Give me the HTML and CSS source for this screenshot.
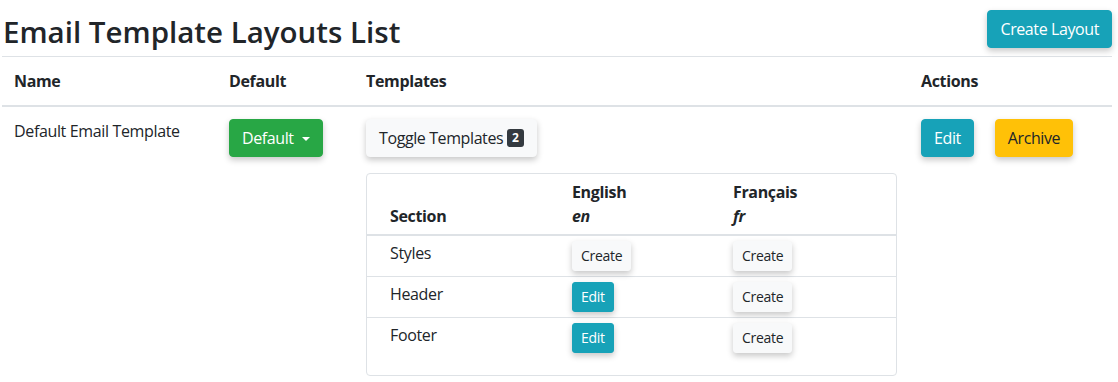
FILE: index.html
```html
<!DOCTYPE html>
<html lang="en">
<head>
<meta charset="utf-8">
<title>Email Template Layouts List</title>
<link rel="stylesheet" href="styles.css">
</head>
<body>
<div class="page">
  <div class="page-header">
    <h1 class="title">Email Template Layouts List</h1>
    <button class="btn btn-info btn-shadow">Create Layout</button>
  </div>
  <table class="layouts">
    <thead>
      <tr>
        <th class="col-name">Name</th>
        <th class="col-default">Default</th>
        <th class="col-templates">Templates</th>
        <th class="col-actions">Actions</th>
      </tr>
    </thead>
    <tbody>
      <tr>
        <td>Default Email Template</td>
        <td><button class="btn btn-success btn-shadow">Default<span class="caret"></span></button></td>
        <td>
          <button class="btn btn-light btn-shadow">Toggle Templates <span class="badge">2</span></button>
          <div class="templates-card">
            <table class="templates">
              <thead>
                <tr>
                  <th class="t-section">Section</th>
                  <th class="t-lang">English<br><em>en</em></th>
                  <th class="t-lang">Français<br><em>fr</em></th>
                </tr>
              </thead>
              <tbody>
                <tr>
                  <td class="t-section">Styles</td>
                  <td><button class="btn btn-sm btn-light btn-shadow">Create</button></td>
                  <td><button class="btn btn-sm btn-light btn-shadow">Create</button></td>
                </tr>
                <tr>
                  <td class="t-section">Header</td>
                  <td><button class="btn btn-sm btn-info btn-shadow">Edit</button></td>
                  <td><button class="btn btn-sm btn-light btn-shadow">Create</button></td>
                </tr>
                <tr>
                  <td class="t-section">Footer</td>
                  <td><button class="btn btn-sm btn-info btn-shadow">Edit</button></td>
                  <td><button class="btn btn-sm btn-light btn-shadow">Create</button></td>
                </tr>
              </tbody>
            </table>
          </div>
        </td>
        <td>
          <div class="actions">
            <button class="btn btn-info btn-shadow">Edit</button>
            <button class="btn btn-warning btn-shadow">Archive</button>
          </div>
        </td>
      </tr>
    </tbody>
  </table>
</div>
</body>
</html>
```
FILE: styles.css
```css
* { box-sizing: border-box; }
html, body {
  margin: 0;
  background: #fff;
}
body {
  font-family: "Open Sans", "Noto Sans", "Liberation Sans", sans-serif;
  font-size: 16px;
  line-height: 24px;
  letter-spacing: -0.35px;
  color: #212529;
}
.page {
  padding: 0 6px 0 2px;
}
.page-header {
  display: flex;
  justify-content: space-between;
  align-items: flex-start;
  padding-top: 10px;
  height: 56px;
}
.title {
  margin: 4px 0 0 1px;
  font-size: 29.5px;
  line-height: 36px;
  font-weight: 600;
  letter-spacing: 0;
  color: #212529;
}
.btn {
  display: inline-block;
  font-family: inherit;
  font-size: 16px;
  line-height: 24px;
  letter-spacing: -0.4px;
  padding: 6px 12px;
  border: 1px solid transparent;
  border-radius: 4px;
  cursor: pointer;
  white-space: nowrap;
}
.btn-sm {
  font-size: 14px;
  line-height: 20px;
  letter-spacing: -0.3px;
  padding: 4px 8px;
  border-radius: 3px;
}
.btn-shadow { box-shadow: 0 3px 6px rgba(0, 0, 0, 0.22); }
.btn-info { background: #17a2b8; border-color: #17a2b8; color: #fff; }
.btn-success { background: #28a745; border-color: #28a745; color: #fff; }
.btn-warning { background: #ffc107; border-color: #ffc107; color: #212529; }
.btn-light { background: #f8f9fa; border-color: #f8f9fa; color: #212529; }
.caret {
  display: inline-block;
  margin-left: 8px;
  vertical-align: 3px;
  border-top: 4.5px solid #fff;
  border-left: 4.5px solid transparent;
  border-right: 4.5px solid transparent;
}
.badge {
  display: inline-block;
  background: #343a40;
  color: #fff;
  font-size: 12px;
  line-height: 12px;
  font-weight: 700;
  letter-spacing: 0;
  padding: 3px 5px;
  border-radius: 3px;
  vertical-align: 2px;
}
.layouts {
  width: 100%;
  border-collapse: collapse;
}
.layouts > thead > tr > th,
.layouts > tbody > tr > td {
  padding: 12px;
  text-align: left;
  vertical-align: top;
  border-top: 1px solid #dee2e6;
}
.layouts > thead > tr > th {
  font-weight: 700;
  border-bottom: 2px solid #dee2e6;
}
.col-name { width: 215px; }
.col-default { width: 137px; }
.col-templates { width: 555px; }
.templates-card {
  margin-top: 16px;
  width: 531px;
  border: 1px solid #dee2e6;
  border-radius: 4px;
  padding-bottom: 17px;
}
.templates {
  width: 100%;
  border-collapse: collapse;
}
.templates th,
.templates td {
  text-align: left;
  padding: 5px 12px;
  vertical-align: top;
}
.templates thead th {
  font-weight: 700;
  vertical-align: bottom;
  padding-top: 6px;
  padding-bottom: 6px;
  border-bottom: 2px solid #dee2e6;
}
.templates em { font-style: italic; }
.templates tbody tr + tr td { border-top: 1px solid #dee2e6; }
.templates .t-section { width: 193px; padding-left: 23px; }
.templates .t-lang:nth-child(2) { width: 161px; }
.actions {
  display: flex;
  gap: 21px;
}
```
